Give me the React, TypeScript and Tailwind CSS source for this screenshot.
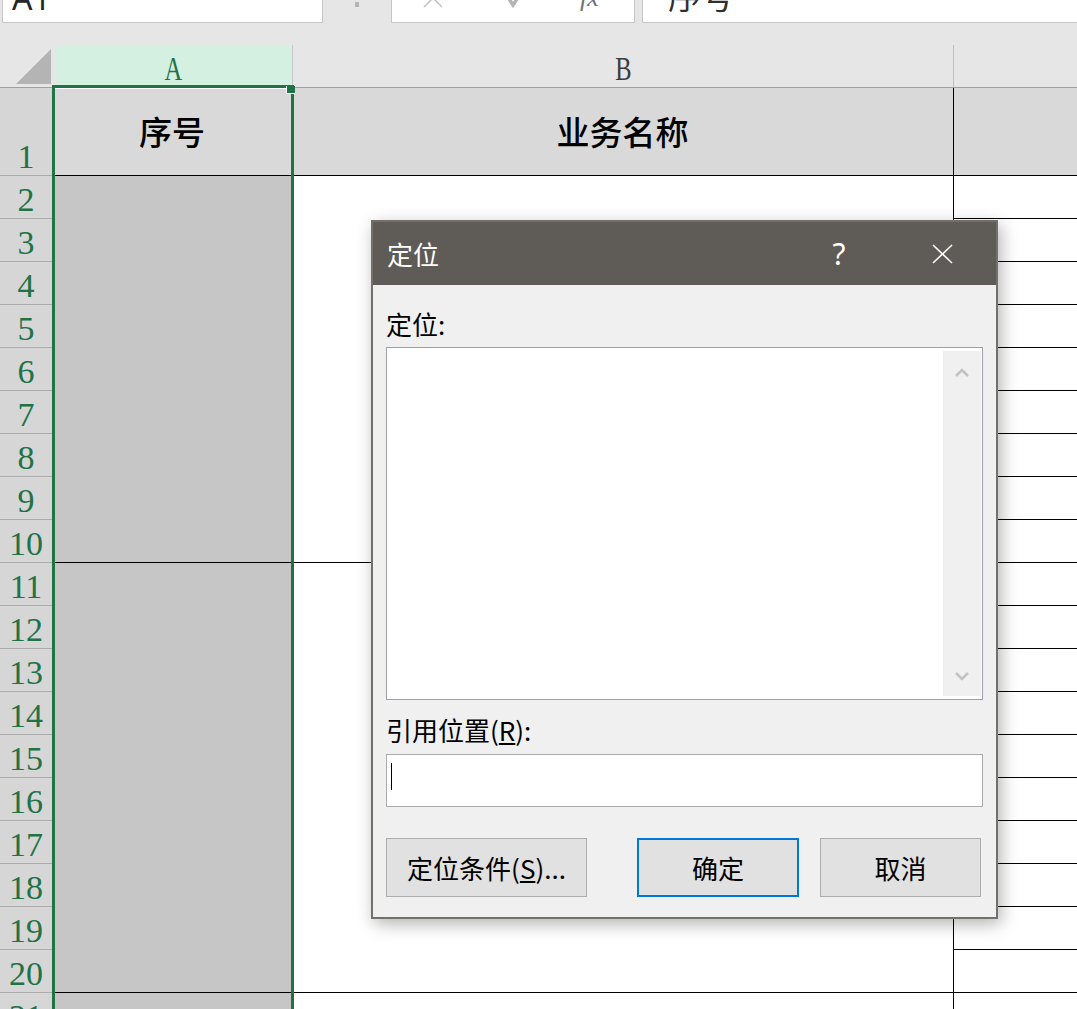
import React from "react";

const cjk = "font-['Noto_Sans_CJK_SC','Noto_Sans',sans-serif]";
const serif = "font-['Liberation_Serif','Noto_Sans_CJK_SC',serif]";

function TopBar() {
  return (
    <div className="h-[45px] bg-[#e6e6e6] flex items-start">
      <div className="ml-[2px] w-[321px] h-[23px] bg-white border border-t-0 border-[#c6c6c6] overflow-hidden">
        <div className="pl-[9px] -mt-[18px] text-[32px] leading-none text-[#262626] font-['Noto_Sans',sans-serif]">
          A1
        </div>
      </div>
      <div className="ml-[32px] mt-[2px] w-[4px] h-[5px] bg-[#b4b4b4]" />
      <div className="ml-[32px] w-[244px] h-[23px] bg-white border border-t-0 border-[#c6c6c6] overflow-hidden flex items-start">
        <svg className="ml-[30px]" width="22" height="8" viewBox="0 0 22 8">
          <line x1="2" y1="-11" x2="20" y2="7" stroke="#c4c4c4" strokeWidth="1.6" />
          <line x1="20" y1="-11" x2="2" y2="7" stroke="#c4c4c4" strokeWidth="1.6" />
        </svg>
        <svg className="ml-[61px]" width="18" height="8" viewBox="0 0 18 8">
          <polyline points="1,-6 8,5 18,-10" fill="none" stroke="#b4b4b4" strokeWidth="3.5" />
        </svg>
        <div className="ml-[57px] -mt-[15px] text-[26px] leading-none italic text-[#707070] font-['Liberation_Serif',serif]">
          fx
        </div>
      </div>
      <div className="ml-[7px] flex-1 h-[23px] bg-white border border-t-0 border-r-0 border-[#c6c6c6] overflow-hidden">
        <div className={`pl-[25px] -mt-[21px] text-[33px] leading-none text-[#303030] ${cjk}`}>序号</div>
      </div>
    </div>
  );
}

function HeaderRow() {
  return (
    <div className="h-[43px] flex bg-[#e6e6e6] border-b border-[#a0a0a0]">
      <div className="w-[52px] h-full">
        <svg width="52" height="42" viewBox="0 0 52 42">
          <polygon points="51,4 51,39 16,39" fill="#b4b4b4" />
        </svg>
      </div>
      <div className="w-[240px] h-full pl-[3px] pr-[1px]">
        <div className={`h-full bg-[#d3f0e0] flex justify-center items-center pt-[5px] text-[34px] leading-none text-[#217346] ${serif}`}>
          <span className="inline-block scale-x-[0.72]">A</span>
        </div>
      </div>
      <div className={`w-[661px] h-full border-l border-[#c8c8c8] flex justify-center items-center pt-[5px] text-[34px] leading-none text-[#3c3c3c] ${serif}`}>
        <span className="inline-block scale-x-[0.72]">B</span>
      </div>
      <div className="flex-1 h-full border-l border-[#c0c0c0]" />
    </div>
  );
}

function RowHeaders() {
  const rows = Array.from({ length: 20 }, (_, i) => i + 2);
  return (
    <div className={`w-[52px] bg-[#d6d6d6] flex flex-col text-[34px] leading-none text-[#217346] ${serif}`}>
      <div className="h-[88px] shrink-0 border-b border-[#ababab] flex items-end justify-center pb-[1px]">1</div>
      {rows.map((r) => (
        <div key={r} className="h-[43px] shrink-0 border-b border-[#ababab] flex items-center justify-center pt-[6px]">
          {r}
        </div>
      ))}
    </div>
  );
}

function ColA() {
  return (
    <div className="w-[240px] flex flex-col bg-[#c6c6c6]">
      <div className={`h-[88px] shrink-0 bg-[#d9d9d9] border-t border-white border-b border-b-black flex items-center justify-center text-[33px] font-medium text-black ${cjk}`}>
        序号
      </div>
      <div className="h-[387px] shrink-0 border-b border-black" />
      <div className="h-[430px] shrink-0 border-b border-black" />
      <div className="h-[60px] shrink-0" />
    </div>
  );
}

function ColB() {
  return (
    <div className="w-[661px] flex flex-col bg-white">
      <div className={`h-[88px] shrink-0 bg-[#d9d9d9] border-b border-black flex items-center justify-center text-[33px] font-medium text-black ${cjk}`}>
        业务名称
      </div>
      <div className="h-[387px] shrink-0 border-b border-black" />
      <div className="h-[430px] shrink-0 border-b border-black" />
      <div className="h-[60px] shrink-0" />
    </div>
  );
}

function ColC() {
  const rows = Array.from({ length: 20 }, (_, i) => i + 2);
  return (
    <div className="flex-1 flex flex-col border-l border-black bg-white">
      <div className="h-[88px] shrink-0 bg-[#d9d9d9] border-b border-black" />
      {rows.map((r) => (
        <div key={r} className="h-[43px] shrink-0 border-b border-black" />
      ))}
    </div>
  );
}

function Dialog() {
  return (
    <div
      className={`absolute left-[371px] top-[220px] w-[627px] h-[699px] border-2 border-[#736f6b] bg-[#f0f0f0] shadow-[3px_5px_16px_rgba(0,0,0,0.3)] flex flex-col ${cjk} text-black`}
    >
      <div className="h-[63px] shrink-0 bg-[#5f5b57] flex items-center text-white">
        <span className="ml-[14px] text-[26px] leading-none">定位</span>
        <span className="ml-auto w-[14px] text-center text-[30px] leading-none font-['Noto_Sans',sans-serif]">?</span>
        <svg className="ml-[86px] mr-[43px]" width="21" height="20" viewBox="0 0 21 20">
          <line x1="1" y1="1" x2="20" y2="19" stroke="white" strokeWidth="1.6" />
          <line x1="20" y1="1" x2="1" y2="19" stroke="white" strokeWidth="1.6" />
        </svg>
      </div>
      <div className="flex-1 flex flex-col px-[13px] pt-[22px]">
        <div className="h-[34px] leading-[34px] text-[26px]">定位:</div>
        <div className="mt-[6px] h-[353px] border border-[#a0a0ab] bg-white p-[3px] pr-[1px] flex">
          <div className="flex-1 bg-white" />
          <div className="w-[38px] bg-[#f0f0f0] flex flex-col items-center justify-between">
            <svg className="mt-[17px]" width="14" height="9" viewBox="0 0 14 9">
              <polyline points="1,8 7,2 13,8" fill="none" stroke="#c2c2c2" strokeWidth="2.5" />
            </svg>
            <svg className="mb-[15px]" width="14" height="9" viewBox="0 0 14 9">
              <polyline points="1,1 7,7 13,1" fill="none" stroke="#c2c2c2" strokeWidth="2.5" />
            </svg>
          </div>
        </div>
        <div className="mt-[13px] h-[34px] leading-[34px] text-[26px]">
          引用位置(<span className="underline underline-offset-2">R</span>):
        </div>
        <div className="mt-[7px] h-[53px] border border-[#ababab] bg-white flex items-start">
          <div className="ml-[4px] mt-[8px] w-[1px] h-[27px] bg-black" />
        </div>
        <div className="mt-[31px] h-[59px] flex">
          <div className="w-[201px] h-full bg-[#e1e1e1] border border-[#adadad] flex items-center justify-center text-[26px] leading-none">
            定位条件(<span className="underline underline-offset-2">S</span>)...
          </div>
          <div className="ml-[50px] w-[162px] h-full bg-[#e1e1e1] border-2 border-[#0078d7] flex items-center justify-center text-[26px] leading-none">
            确定
          </div>
          <div className="ml-[21px] w-[161px] h-full bg-[#e1e1e1] border border-[#adadad] flex items-center justify-center text-[26px] leading-none">
            取消
          </div>
        </div>
      </div>
    </div>
  );
}

export default function App() {
  return (
    <div className="relative w-[1077px] h-[1009px] overflow-hidden bg-white">
      <TopBar />
      <HeaderRow />
      <div className="flex">
        <RowHeaders />
        <ColA />
        <ColB />
        <ColC />
      </div>
      <div className="absolute left-[52px] top-[85px] w-[242px] h-[930px] border-[3px] border-b-0 border-[#217346] pointer-events-none" />
      <div className="absolute left-[286px] top-[86px] w-[9px] h-[8px] bg-[#217346] border-l border-b border-white" />
      <Dialog />
    </div>
  );
}
